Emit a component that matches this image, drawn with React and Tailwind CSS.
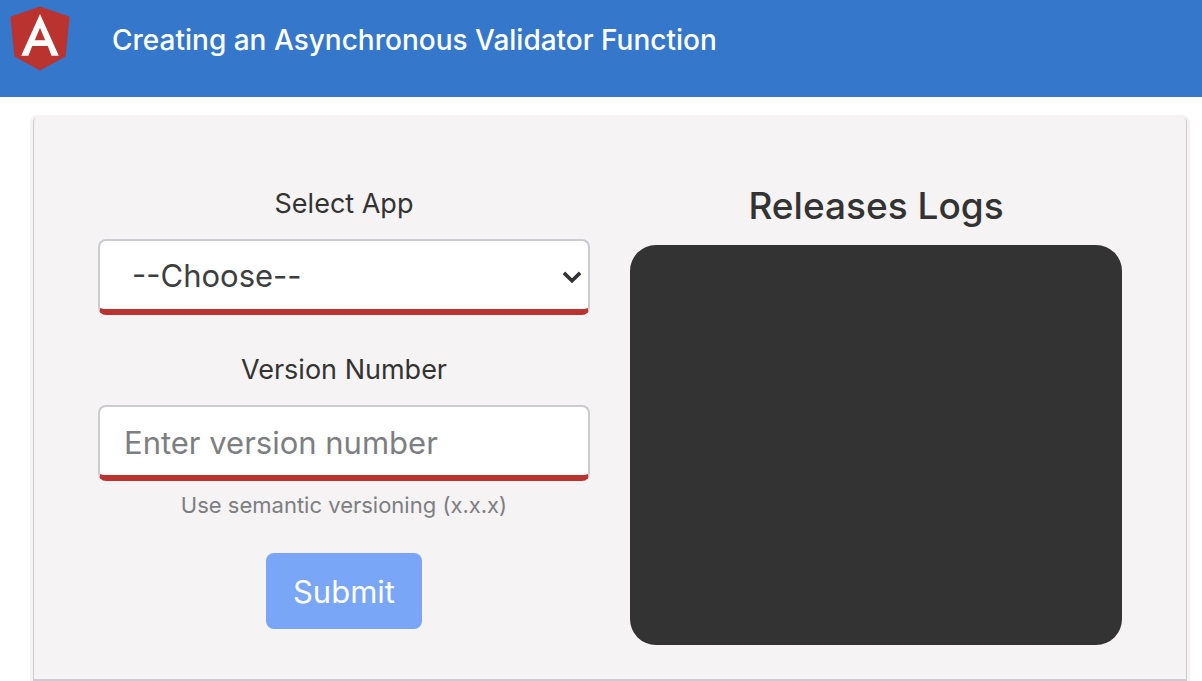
import React from "react";

function AngularLogo() {
  return (
    <svg viewBox="0 0 60 66" className="h-[66px] w-[60px] shrink-0" aria-hidden="true">
      <path fill="#bb332f" d="M30 .4 59.6 10.8 55.6 50.5 30 64.5 4.4 50.5 .4 10.8Z" />
      <path
        fill="#fff"
        fillRule="evenodd"
        d="M30 8 48.8 49.8H41.5L37.8 40H22.2L18.5 49.8H11.2ZM30 21.8 24.8 34.2H35.2Z"
      />
    </svg>
  );
}

function Chevron() {
  return (
    <svg
      viewBox="0 0 20 14"
      className="pointer-events-none absolute top-8 right-2 h-[14px] w-5"
      fill="none"
      stroke="#333"
      strokeWidth="3.6"
      aria-hidden="true"
    >
      <path d="M1.9 1.9 10 9.8 18.1 1.9" />
    </svg>
  );
}

export default function App() {
  return (
    <div className="bg-white font-['Inter',sans-serif] text-[#333]">
      <header className="flex h-[97px] items-start gap-[42px] bg-[#3577cb] px-[10px] pt-[6px]">
        <AngularLogo />
        <h1 className="pt-4 text-[28px] leading-9 font-medium text-white">
          Creating an Asynchronous Validator Function
        </h1>
      </header>

      <main className="mt-[21px] mr-[15px] ml-[33px] grid grid-cols-2 gap-10 rounded-t-[4px] border-x border-b-2 border-x-[#cbcbcd] border-b-[#cbcbd2] bg-[#f5f3f4] px-16 pb-[34px] shadow-[0_0_0_3px_#f5f3f4]">
        <form className="flex flex-col items-center pt-[65px]" onSubmit={(e) => e.preventDefault()}>
          <label htmlFor="app" className="mb-[14px] text-[27px] leading-[42px]">
            Select App
          </label>
          <div className="relative w-full">
            <select
              id="app"
              className="h-[76px] w-full appearance-none rounded-lg border-2 border-b-[6px] border-[#cbcbd2] border-b-[#bb332f] bg-white pt-[3px] pr-12 pl-8 text-[31px] text-[#3d3e40]"
            >
              <option>--Choose--</option>
            </select>
            <Chevron />
          </div>

          <label htmlFor="version" className="mt-[34px] mb-[14px] text-[27px] leading-[42px]">
            Version Number
          </label>
          <input
            id="version"
            type="text"
            placeholder="Enter version number"
            className="h-[76px] w-full rounded-lg border-2 border-b-[6px] border-[#cbcbd2] border-b-[#bb332f] bg-white px-6 pt-[3px] text-[31px] placeholder:text-[#7d7e82]"
          />
          <small className="mt-2 text-[22px] leading-8 text-[#7d7e82]">
            Use semantic versioning (x.x.x)
          </small>

          <button
            type="submit"
            disabled
            className="mt-8 h-[76px] rounded-lg bg-[#79a6f6] px-[27px] pt-[3px] text-[31px] text-white"
          >
            Submit
          </button>
        </form>

        <section className="flex flex-col pt-16">
          <h2 className="mb-[15px] text-center text-[37px] leading-[48px] font-medium">Releases Logs</h2>
          <div className="h-[400px] rounded-[26px] bg-[#333]" />
        </section>
      </main>
    </div>
  );
}
